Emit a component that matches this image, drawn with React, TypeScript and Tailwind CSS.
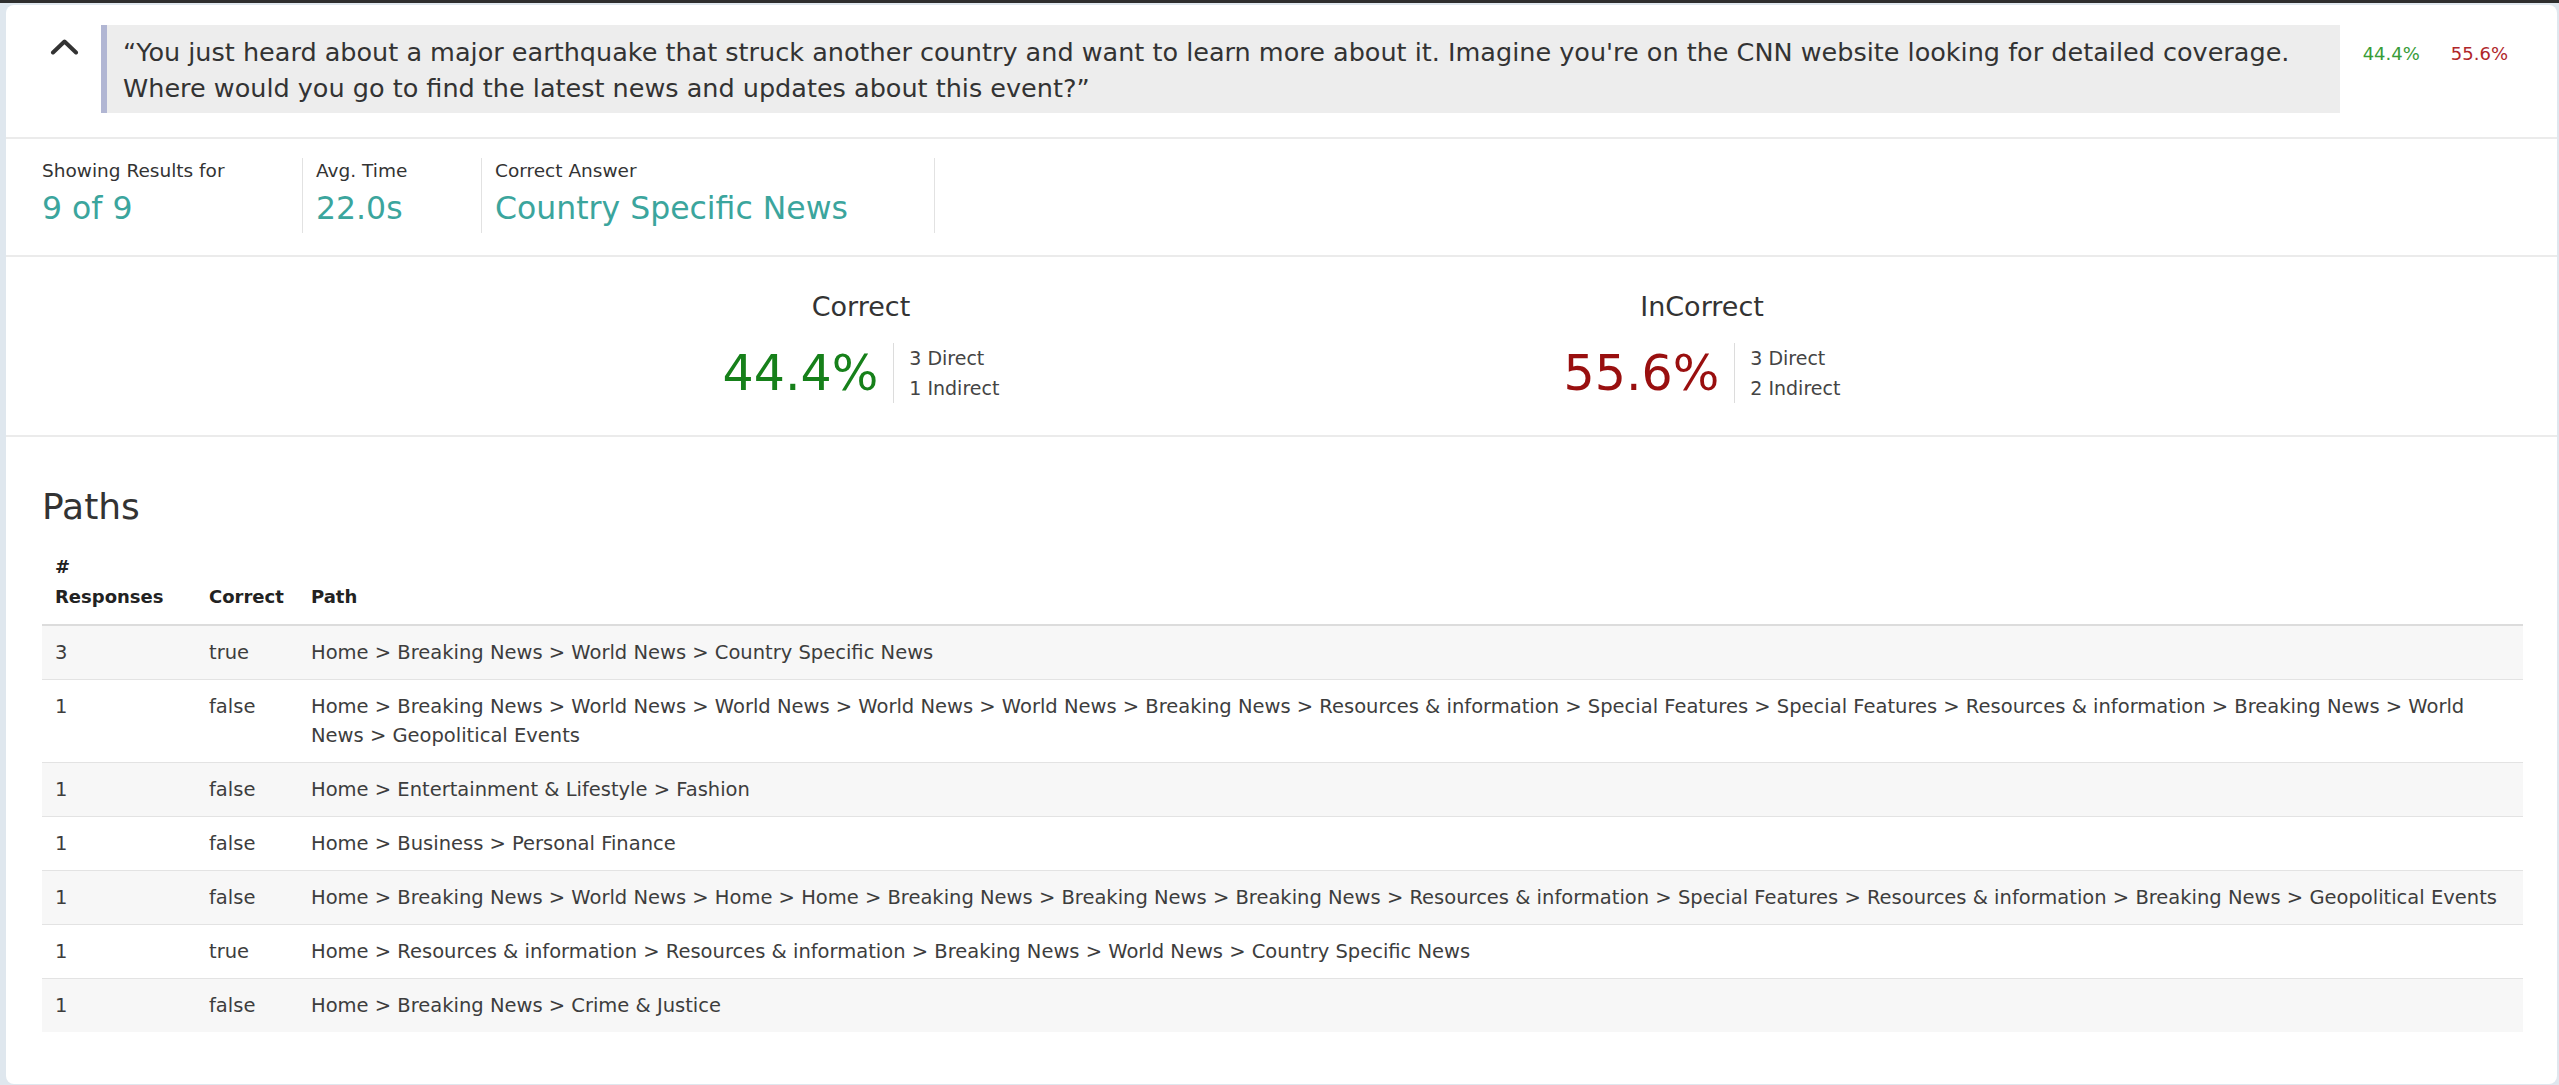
import React from "react";

const paths: { n: number; ok: boolean; path: string[] }[] = [
    { n: 3, ok: true, path: ["Home", "Breaking News", "World News", "Country Specific News"] },
    { n: 1, ok: false, path: ["Home", "Breaking News", "World News", "World News", "World News", "World News", "Breaking News", "Resources & information", "Special Features", "Special Features", "Resources & information", "Breaking News", "World News", "Geopolitical Events"] },
    { n: 1, ok: false, path: ["Home", "Entertainment & Lifestyle", "Fashion"] },
    { n: 1, ok: false, path: ["Home", "Business", "Personal Finance"] },
    { n: 1, ok: false, path: ["Home", "Breaking News", "World News", "Home", "Home", "Breaking News", "Breaking News", "Breaking News", "Resources & information", "Special Features", "Resources & information", "Breaking News", "Geopolitical Events"] },
    { n: 1, ok: true, path: ["Home", "Resources & information", "Resources & information", "Breaking News", "World News", "Country Specific News"] },
    { n: 1, ok: false, path: ["Home", "Breaking News", "Crime & Justice"] },
];

function Stat({ label, value, className }: { label: string; value: string; className: string }) {
    return <div className={className}>
        <div className="text-[18.5px] leading-[26px] text-[#333]">{label}</div>
        <div className="text-[31.5px] leading-[49px] text-[#3ba59d]">{value}</div>
    </div>
}

function Outcome({ title, pct, color, direct, indirect }: { title: string; pct: string; color: string; direct: number; indirect: number }) {
    return <div className="w-[841px] flex flex-col items-center">
        <div className="text-[27px] leading-[40px] text-[#333]">{title}</div>
        <div className="mt-[16px] flex items-center">
            <div className={`text-[49px] leading-[59px] ${color}`}>{pct}</div>
            <div className="ml-[15px] pl-[15px] border-l border-[#dcdcdc] text-[19px] leading-[30px] text-[#444]">
                <div>{direct} Direct</div>
                <div>{indirect} Indirect</div>
            </div>
        </div>
    </div>
}

export default function App() {
    return <div className="min-h-screen bg-[#dfe7ee] border-t-[3px] border-[#2e2e2e] pt-[2px] pl-[6px] pr-[2px] pb-[2px] font-['DejaVu_Sans',sans-serif]">
        <div className="bg-white rounded-[8px] pb-[52px]">

            {/* question */}
            <div className="flex items-start pt-[20px] pb-[24px] pl-[44px] pr-[49px] border-b-2 border-[#ebebeb]">
                <svg width="29" height="17" viewBox="0 0 29 17" className="mt-[13px] shrink-0">
                    <polyline points="3,14.5 14.5,3.5 26,14.5" fill="none" stroke="#333" strokeWidth="4" strokeLinecap="round" strokeLinejoin="round" />
                </svg>
                <div className="ml-[22px] flex-1 bg-[#ededed] border-l-[6px] border-[#b1b6d3] pl-[16px] pr-[16px] pt-[9px] pb-[7px] text-[25.5px] leading-[36px] text-[#333]">
                    “You just heard about a major earthquake that struck another country and want to learn more about it. Imagine you're on the CNN website looking for detailed coverage. Where would you go to find the latest news and updates about this event?”
                </div>
                <div className="ml-[23px] mt-[18px] flex gap-[31px] text-[18px] leading-[22px]">
                    <span className="text-[#389c38]">44.4%</span>
                    <span className="text-[#b0262a]">55.6%</span>
                </div>
            </div>

            {/* summary */}
            <div className="flex pl-[36px] pt-[19px] pb-[22px] border-b-2 border-[#ebebeb]">
                <Stat label="Showing Results for" value="9 of 9" className="w-[260px]" />
                <Stat label="Avg. Time" value="22.0s" className="w-[179px] pl-[13px] border-l border-[#e2e2e2]" />
                <Stat label="Correct Answer" value="Country Specific News" className="w-[454px] pl-[13px] border-l border-r border-[#e2e2e2]" />
            </div>

            {/* correct / incorrect */}
            <div className="flex justify-center pt-[30px] pb-[32px] border-b-2 border-[#ebebeb]">
                <Outcome title="Correct" pct="44.4%" color="text-[#16801a]" direct={3} indirect={1} />
                <Outcome title="InCorrect" pct="55.6%" color="text-[#990f0f]" direct={3} indirect={2} />
            </div>

            {/* paths */}
            <div className="pl-[36px] pr-[34px] pt-[46px]">
                <div className="text-[36px] leading-[48px] text-[#333]">Paths</div>
                <table className="mt-[21px] w-full border-collapse text-left">
                    <thead>
                        <tr className="border-b-2 border-[#dcdcdc] text-[18px] leading-[30px] font-bold text-[#222] align-bottom">
                            <th className="w-[154px] pl-[13px] pb-[12px] font-bold">
                                <div>#</div>
                                <div>Responses</div>
                            </th>
                            <th className="w-[102px] pl-[13px] pb-[12px] font-bold">Correct</th>
                            <th className="pl-[13px] pb-[12px] font-bold">Path</th>
                        </tr>
                    </thead>
                    <tbody className="text-[19.5px] leading-[29px] text-[#3d3d3d]">
                        {paths.map((p, i) => <tr key={i} className={`${i % 2 === 0 ? "bg-[#f7f7f7]" : "bg-white"} ${i < paths.length - 1 ? "border-b border-[#e3e3e3]" : ""} align-top`}>
                            <td className="pl-[13px] py-[12px]">{p.n}</td>
                            <td className="pl-[13px] py-[12px]">{p.ok ? "true" : "false"}</td>
                            <td className="pl-[13px] pr-[8px] py-[12px]">{p.path.join(" > ")}</td>
                        </tr>)}
                    </tbody>
                </table>
            </div>

        </div>
    </div>
}
